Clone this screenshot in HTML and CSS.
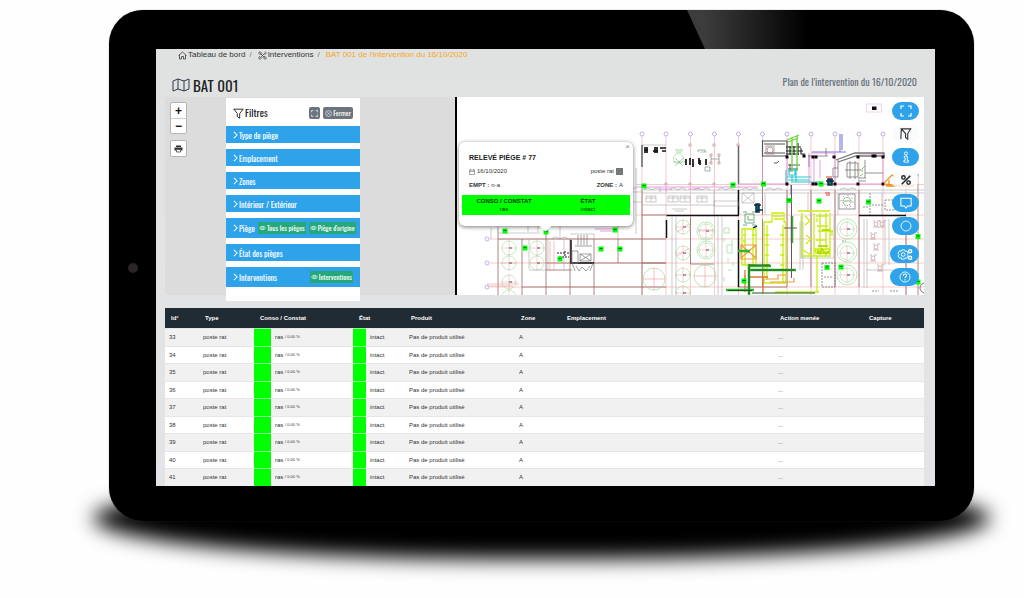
FILE: index.html
```html
<!DOCTYPE html>
<html lang="fr">
<head>
<meta charset="utf-8">
<title>BAT 001 – Plan de l'intervention</title>
<link rel="stylesheet" href="styles.css">
</head>
<body>
<svg class="defs" width="0" height="0" aria-hidden="true">
  <defs>
    <symbol id="i-eye" viewBox="0 0 16 12"><path d="M1 6c3-5 11-5 14 0c-3 5-11 5-14 0z" fill="none" stroke="currentColor" stroke-width="1.6"/><circle cx="8" cy="6" r="2.4" fill="none" stroke="currentColor" stroke-width="1.4"/></symbol>
    <symbol id="i-chev" viewBox="0 0 6 10"><path d="M1 1l4 4l-4 4" fill="none" stroke="currentColor" stroke-width="1.3"/></symbol>
    <symbol id="i-expand" viewBox="0 0 12 12"><path d="M1 4V1h3M8 1h3v3M11 8v3H8M4 11H1V8" fill="none" stroke="currentColor" stroke-width="1.2"/></symbol>
    <symbol id="i-funnel" viewBox="0 0 14 14"><path d="M1 1.500h12L8.500 7v6L5.500 11V7z" fill="none" stroke="currentColor" stroke-width="1.200" stroke-linejoin="round"/></symbol>
  </defs>
</svg>
<div class="tablet">
  <div class="camera"></div>
  <main class="screen">
    <nav class="crumbs" aria-label="Fil d'Ariane">
      <a href="#"><svg class="ico9" viewBox="0 0 18 18"><path d="M1 9l8-7l8 7M3 8v8h4v-5h4v5h4V8" fill="none" stroke="currentColor" stroke-width="1.500"/></svg>Tableau de bord</a>
      <span class="sep">/</span>
      <a href="#"><svg class="ico9" viewBox="0 0 18 18"><path d="M3 3l12 12M15 3L3 15M1 4l3-3l4 4l-3 3zM10 13l3-3l4 4l-3 3zM14 1l3 3l-4 4M4 10l-3 4l3 3l4-4" fill="none" stroke="currentColor" stroke-width="1.300"/></svg>Interventions</a>
      <span class="sep">/</span>
      <span class="current">BAT 001 de l'intervention du 16/10/2020</span>
    </nav>
    <header class="head">
      <h1><svg class="mapico" viewBox="0 0 18 14"><path d="M1 3l5-2l6 2l5-2v10l-5 2l-6-2l-5 2zM6 1v10M12 3v10" fill="none" stroke="#2f3b45" stroke-width="1"/></svg>BAT 001</h1>
      <p>Plan de l'intervention du 16/10/2020</p>
    </header>

    <section class="map">
      <div class="tools">
        <div class="zoom"><button aria-label="Zoom avant">+</button><button aria-label="Zoom arrière">−</button></div>
        <button class="print" aria-label="Imprimer"><svg class="ico9" viewBox="0 0 18 18"><path d="M4 3h10v3H4zM1 7h16v6h-3v-2H4v2H1z" fill="#333"/><path d="M5 11h8v5H5z" fill="#fff" stroke="#333" stroke-width="1.500"/></svg></button>
      </div>
      <aside class="filters">
        <div class="fhead">
          <h2><svg class="ico11"><use href="#i-funnel"/></svg>Filtres</h2>
          <button class="gray" aria-label="Agrandir"><svg class="ico7"><use href="#i-expand"/></svg></button>
          <button class="gray"><svg class="ico7" viewBox="0 0 12 12"><path d="M4 4l4 4M8 4l-4 4" stroke="#fff"/><circle cx="6" cy="6" r="5" fill="none" stroke="#fff"/></svg>Fermer</button>
        </div>
        <div class="fitem"><button class="fold"><svg class="chev"><use href="#i-chev"/></svg>Type de piège</button></div>
        <div class="fitem"><button class="fold"><svg class="chev"><use href="#i-chev"/></svg>Emplacement</button></div>
        <div class="fitem"><button class="fold"><svg class="chev"><use href="#i-chev"/></svg>Zones</button></div>
        <div class="fitem"><button class="fold"><svg class="chev"><use href="#i-chev"/></svg>Intérieur / Extérieur</button></div>
        <div class="fitem tall"><button class="fold"><svg class="chev"><use href="#i-chev"/></svg>Piège</button><button class="green"><svg class="eye"><use href="#i-eye"/></svg>Tous les pièges</button><button class="green"><svg class="eye"><use href="#i-eye"/></svg>Piège d'origine</button></div>
        <div class="fitem"><button class="fold"><svg class="chev"><use href="#i-chev"/></svg>État des pièges</button></div>
        <div class="fitem tall"><button class="fold"><svg class="chev"><use href="#i-chev"/></svg>Interventions</button><button class="green"><svg class="eye"><use href="#i-eye"/></svg>Interventions</button></div>
      </aside>

      <div class="plan">
        <svg class="drawing" viewBox="457 97 467 198" preserveAspectRatio="xMinYMin slice" role="img" aria-label="Plan du bâtiment">
          <defs>
            <g id="pin"><rect x="-2.500" y="-2.500" width="5" height="5" fill="#0f0"/><path d="M-1.500-.5h3" stroke="#064" stroke-width="1"/></g>
            <g id="tank" fill="none" stroke-width=".5"><circle r="7" stroke="#8fd48f"/><path d="M-8 0H8M0-8V8" stroke="#e9a5a5"/><path d="M0 0h3" stroke="#555" stroke-width="1"/></g>
            <g id="bub"><circle r="2" fill="#fff" stroke="#9a9ae0" stroke-width=".7"/></g>
            <g id="desk" fill="none" stroke="#999" stroke-width=".5"><rect width="10" height="6"/><path d="M0 2h10M5 0v6"/></g>
            <g id="seat" fill="none" stroke="#b08080" stroke-width=".6"><circle r="2"/><path d="M-3-3h2M1-3h3M-3 3h6"/></g>
            <g id="doors" fill="none" stroke="#888" stroke-width=".5"><path d="M-8 2q3-4 8 0q5-4 8 0"/></g>
            <g id="col"><rect x="-1.500" y="-1.500" width="3" height="3" fill="#120008"/></g>
            <g id="colo"><rect x="-1" y="-1" width="2" height="2" fill="#fff" stroke="#a66" stroke-width=".5"/></g>
          </defs>
          <!-- axes -->
          <path d="M642 136V295M666 136V295M690.500 136V295M714.500 136V295M738.500 136V295M762.500 136V295M787 136V295M811 136V295M835 136V295M859 136V295M883 136V295M906 174V295M490 239H924M490 263H924M490 287H924M636 184.500H924M636 215H924" fill="none" stroke="#f2b4b4" stroke-width=".7"/>
          <path d="M498 228V295M522 239V295M546 232V295M570 239V295M594 239V270M618 239V263M594 270V295M498 239H666M546 263H666M522 287H666M546 270H572M642 190V295M666 215H642M690.500 217V264H714M666 263H642M762.500 140V215M762.500 219V287M787 190V287M811 190V287M835 190V287M859 190V287M906 217V295M918 174V295M738 287H787" fill="none" stroke="#9d6767" stroke-width=".8"/>
          <path d="M491 228V239M498 233H540M498 222V228M528 226V232M538 226V232M570 234H594V239M560 222V239M618 222V239M529 239V269M548 239V270M564 239V270M642 190H924M642 193H762M633 192H642M633 202H642M636 168V234M642 145H666M642 205H714M714 190V215M738 190V215M859 193H924M882 193V215M672 217V295M676 217V295M718 217V295M722 217V295M801 216V258H834M834 216V258M802 216V258M800 222V270M803 222V270M864 219V288M867 219V288M885 219V265M889 219V265M866 270H893M762 193H859M529 270H546M765 193V215M808 193V212M838 193V215" fill="none" stroke="#aaa" stroke-width=".6"/>
          <use href="#bub" x="642" y="134"/><use href="#bub" x="666" y="134"/><use href="#bub" x="690.500" y="134"/><use href="#bub" x="714.500" y="134"/><use href="#bub" x="738.500" y="134"/><use href="#bub" x="762.500" y="134"/><use href="#bub" x="787" y="134"/><use href="#bub" x="811" y="134"/><use href="#bub" x="835" y="134"/><use href="#bub" x="859" y="134"/><use href="#bub" x="883" y="134"/><use href="#bub" x="487" y="239"/><use href="#bub" x="487" y="263"/><use href="#bub" x="487" y="287"/>
          <!-- walls -->
          <path d="M666.500 215.500H739M738.500 190V215M666.500 220V238M738.500 220V287M571 240V263H594M859 215.500H906" fill="none" stroke="#111" stroke-width="1.500"/>
          <path d="M642 145V167M738.500 145V184" fill="none" stroke="#666" stroke-width="1.500"/>
          <!-- upper machines -->
          <path d="M645 147v6M647 147v6M645 150h3M655 147v6M657 147v6M653 151h5M660 148h6M662 151h4M686 159v6M690 158v7M693 159v8M699 158v6M700 160v5M706 159v6" fill="none" stroke="#111" stroke-width="1.700"/>
          <path d="M675 150h8M676 152h6M700 152h7M675 158l8 8M683 158l-8 8M673 162h12" fill="none" stroke="#77b577" stroke-width=".6"/>
          <circle cx="678.500" cy="158.500" r="5" fill="none" stroke="#8fd48f" stroke-width=".6"/>
          <path d="M698 152v-2h7v2M711 155v8M719 155v8M711 159h8M705 167h5v4h-5z" fill="none" stroke="#777" stroke-width=".6"/>
          <use href="#colo" x="690" y="145"/><use href="#colo" x="714" y="145"/><use href="#colo" x="690" y="184"/><use href="#colo" x="714" y="184"/><use href="#colo" x="666" y="184"/><use href="#colo" x="711" y="155"/><use href="#colo" x="719" y="155"/><use href="#colo" x="711" y="163"/><use href="#colo" x="719" y="163"/><use href="#colo" x="738" y="145"/>
          <path d="M636 187H740M642 184V190M660 189H672M688 189H700M660 187v5M666 187v5M738 187h20M620 188h16M595 229h20M600 231h12" fill="none" stroke="#e6a0e0" stroke-width="1"/>
          <use href="#doors" x="652" y="188"/><use href="#doors" x="678" y="188"/><use href="#doors" x="702" y="188"/><use href="#doors" x="726" y="188"/><use href="#doors" x="750" y="188"/><use href="#doors" x="774" y="188"/><use href="#doors" x="848" y="188"/><use href="#doors" x="560" y="237"/>
          <use href="#desk" x="646" y="196"/><use href="#desk" x="668" y="196"/><use href="#desk" x="680" y="196"/><use href="#desk" x="697" y="196"/>
          <path d="M742 193h12v10h-12zM742 193l12 10M754 193l-12 10M714 201h24v5h-24zM672 209h15M675 211h9" fill="none" stroke="#aaa" stroke-width=".6"/>
          <path d="M745 214h9v9h-9zM743 212h4M752 212h4M743 225h4M752 225h4M748 216v4h5" fill="none" stroke="#4a9a5a" stroke-width=".8"/>
          <!-- tanks -->
          <use href="#tank" x="509" y="248"/><use href="#tank" x="537" y="248"/><use href="#tank" x="509" y="263"/><use href="#tank" x="537" y="263"/><use href="#tank" x="509" y="282"/><use href="#tank" x="509" y="297"/><use href="#tank" x="683" y="227"/><use href="#tank" x="683" y="253"/><use href="#tank" x="683" y="275"/><use href="#tank" x="683" y="293"/><use href="#tank" x="706" y="231"/><use href="#tank" x="706" y="250"/>
          <use href="#tank" x="847" y="229"/><use href="#tank" x="847" y="253"/><use href="#tank" x="847" y="275"/>
          <g fill="none" stroke="#8fd48f" stroke-width=".6"><circle cx="654" cy="279" r="11"/><circle cx="705" cy="276" r="11"/><circle cx="706" cy="231" r="9"/><circle cx="706" cy="250" r="9"/><circle cx="847" cy="229" r="10"/><circle cx="847" cy="252" r="10"/><circle cx="847" cy="275" r="10"/><path d="M724 228v5h5v-5zM724 238v4M732 240v6M727 245h5v8h-5zM728 258v5M733 262v4M728 270h4M724 277v5"/></g>
          <path d="M643 279h22M654 268v22M694 276h22M705 265v22M698 230h16M677 232l12-8M677 256l12-8M487 284h32M487 286h26M550 241v30M554 241v30" fill="none" stroke="#e99" stroke-width=".6"/>
          <path d="M578 235v10M581 235v10M584 235v10M587 235v10M575 246h17M572 251h6v12h-6zM580 254h11v7h-11zM580 254l11 7M591 254l-11 7M576 266l3 5l3-4l4 4l4-5M572 263l3 8M593 263l-3 8" fill="none" stroke="#777" stroke-width=".7"/>
          <path d="M557 253h8M559 257h10M565 251v6M567 253h4" stroke="#222" stroke-width="1" fill="none" stroke-dasharray="2 1"/>
          <!-- upper right hall -->
          <path d="M762.500 141H787V156H762.500zM764 144H785M764 153H785" fill="none" stroke="#555" stroke-width="1.200"/>
          <rect x="766" y="146" width="8" height="8" fill="none" stroke="#977" stroke-width=".7"/><circle cx="770" cy="150" r="3" fill="none" stroke="#977" stroke-width=".7"/>
          <path d="M786 147h15M786 151h17M786 154h13M790 146v9M794 146v9M798 143v12M801 148v6h4" fill="none" stroke="#222" stroke-width="1.100"/>
          <path d="M774 163h3l2-2M788 165h12M788 169h10M790 164v8" fill="none" stroke="#333" stroke-width=".8"/>
          <path d="M792 138V172M797 136V171M787 140l12-5M788 142l10-4" fill="none" stroke="#6bd23c" stroke-width="1.300"/>
          <path d="M789 170h6v5h-6zM787 177h24M788 180h22M786 170v14M796 168v14M793 182h28M792 175v8" fill="none" stroke="#27c5cf" stroke-width="1.100"/>
          <path d="M809 155v12M812 152H846M840 134V152M842 134V150M809 160v6M791 185v10" fill="none" stroke="#7b78dd" stroke-width="1.100"/>
          <path d="M762.500 157V184H787V157M811 153H835V184H811M809 153v31M814 158v26M820 160v18M835 184h48M883 152V184M860 154h22M762 184h-24" fill="none" stroke="#df92d6" stroke-width=".9"/>
          <path d="M836 160L855 153H884V156H856L838 162" fill="none" stroke="#777" stroke-width="1.300"/>
          <path d="M847 163h11v14h-11zM850 161v18M855 161v18M845 170h16M865 173h18M865 160v18M826 148v8M808 156h20M833 168h5v9h-5zM858 178h8M858 181h8M838 160v8" fill="none" stroke="#666" stroke-width=".7"/>
          <path d="M862 172v-3l3-3M860 176l3-2" fill="none" stroke="#4dbb4d" stroke-width=".8"/>
          <use href="#col" x="787" y="157"/><use href="#col" x="804" y="156"/><use href="#col" x="813" y="157"/><use href="#col" x="816" y="157"/><use href="#col" x="834" y="157"/><use href="#col" x="858" y="157"/><use href="#col" x="873" y="156"/><use href="#col" x="875" y="156"/><use href="#col" x="883" y="157"/><use href="#col" x="787" y="184"/><use href="#col" x="813" y="184"/><use href="#col" x="816" y="184"/><use href="#col" x="835" y="184"/><use href="#col" x="858" y="184"/><use href="#col" x="883" y="184"/>
          <path d="M828 179h4v6h-4zM756 204h3v8h-3zM754 205h7M757 210h6M826 181h8M753 228l4-2" fill="#166" stroke="#134" stroke-width="1.600"/>
          <path d="M826 177h6M825 193h5M826 195h4" stroke="#e33" stroke-width="1"/>
          <rect x="866.500" y="104" width="15" height="8" fill="none" stroke="#efbfe9" stroke-width=".7"/><rect x="872" y="106.500" width="4.500" height="3.500" fill="#111"/>
          <path d="M884 183l8-8l3 2M884 184l8 1M886 186h28M889 180v6" fill="none" stroke="#f09227" stroke-width="1.300"/>
          <!-- equipment -->
          <g fill="none" stroke="#c6ee10" stroke-width="1.300">
            <path d="M742 229h14v36h-14zM745 229v36M753 229v36M743 235h3M743 241h3M752 235h4M752 257h4"/>
            <path d="M764 222h8v-9h12v9h2v61h-22zM767 225v55M783 225v58M773 216h10M774 219h9M765 235h4M765 245h4M765 255h4M765 265h4M780 235h4M780 245h4M780 255h4M780 265h4"/>
            <path d="M798 211h32M802 213v43h28v-43M814 213v43M820 213v42M826 213v40M805 216l5 5l-5 4M806 235l5 4l-5 5M803 250l8 5M815 249h14v4h-13zM818 231h15M816 240h10M817 226h11M832 231v5M816 216h12M817 218v4"/>
            <path d="M817 256V293M775 292H819"/>
          </g>
          <path d="M817 250l3 3l2-4l4 5l3-3M817 253h12M822 230h8M818 246h10" stroke="#b8de08" stroke-width="2" fill="none"/>
          <path d="M741 245l15 13M756 245l-15 13M741 245h15v14h-15zM765 279h13v-4h8M770 282h24v-4M745 275v8" fill="none" stroke="#f2994a" stroke-width="1.200"/>
          <path d="M745 270V292M748 277H768M763 277v16" stroke="#d77a35" stroke-width="1.300" fill="none"/>
          <path d="M749 264V295M749 266H771M748 270H796M726 290H754M738 251H750M792 216V243" fill="none" stroke="#33b533" stroke-width="2.500"/>
          <path d="M749 265H770M751 270H795M728 290.500H752M791.500 217V240M749 266V294M752 293H815" fill="none" stroke="#165b16" stroke-width="1"/>
          <path d="M791.500 185V278M784 228h13" fill="none" stroke="#735066" stroke-width="1"/>
          <rect x="839" y="194" width="16" height="15" fill="none" stroke="#666" stroke-width=".7"/><circle cx="847" cy="201.500" r="4" fill="none" stroke="#555" stroke-width=".8" stroke-dasharray="1.500 1"/><path d="M844 201h6" stroke="#6c6" stroke-width="1"/><circle cx="847" cy="201.500" r="6" fill="none" stroke="#a55" stroke-width=".8" stroke-dasharray="1 3.700"/>
          <use href="#seat" x="876" y="224"/><use href="#seat" x="873" y="236"/><use href="#seat" x="876" y="247"/><use href="#seat" x="873" y="258"/><use href="#seat" x="882" y="224"/><use href="#seat" x="880" y="268"/>
          <path d="M822 263h13v24h-13zM824 277h8M863 207h6M872 291h7M890 291h9M842 241h4M870 193v22M872 205h12M885 200h10v10h-10z" fill="none" stroke="#777" stroke-width=".8" stroke-dasharray="2 1"/>
          <circle cx="925" cy="288" r="5" fill="none" stroke="#555" stroke-width=".8"/>
          <!-- traps -->
          <use href="#pin" x="505" y="231"/><use href="#pin" x="546" y="232"/><use href="#pin" x="525" y="248"/><use href="#pin" x="560" y="259"/><use href="#pin" x="601" y="249"/><use href="#pin" x="620" y="249"/><use href="#pin" x="615" y="230"/><use href="#pin" x="644" y="186"/><use href="#pin" x="733" y="185"/><use href="#pin" x="763.500" y="184"/><use href="#pin" x="821" y="184"/><use href="#pin" x="789" y="200.500"/><use href="#pin" x="819" y="201"/><use href="#pin" x="868.500" y="202"/><use href="#pin" x="744" y="281"/><use href="#pin" x="827" y="267.500"/><use href="#pin" x="841" y="267"/><use href="#pin" x="918" y="236.500"/><use href="#pin" x="918" y="282"/>
        </svg>

        <div class="popup">
          <button class="close" aria-label="Fermer">×</button>
          <h3>RELEVÉ PIÈGE # 77</h3>
          <div class="prow"><span><svg class="cal" viewBox="0 0 12 12"><path d="M1 2h10v9H1zM1 5h10M3 0v3M9 0v3" fill="none" stroke="#555"/></svg>16/10/2020</span><span>poste rat <i class="sq"></i></span></div>
          <div class="prow"><span><b>EMPT :</b> n-a</span><span><b>ZONE :</b> A</span></div>
          <div class="state"><div><b>CONSO / CONSTAT</b><span>ras</span></div><div><b>ÉTAT</b><span>intact</span></div></div>
        </div>

        <div class="actions">
          <button class="pill" aria-label="Plein écran"><svg><use href="#i-expand"/></svg></button>
          <button class="pill off" aria-label="Filtres"><svg viewBox="0 0 14 14"><path d="M1.500 1h11L9 6.500V13L6.500 11V6.500zM1.500 1L1 13" fill="none" stroke="#333" stroke-width="1.300"/></svg></button>
          <button class="pill" aria-label="Informations"><svg viewBox="0 0 14 14"><circle cx="7" cy="2.800" r="1.800" fill="none" stroke="#fff"/><path d="M5 6h3.500v5H10v2H4.500v-2H6V8H5z" fill="none" stroke="#fff"/></svg></button>
          <button class="pill off" aria-label="Pourcentages"><svg viewBox="0 0 14 14"><path d="M12 2L2 12" stroke="#222" stroke-width="1.800"/><circle cx="4" cy="4" r="2" fill="none" stroke="#222" stroke-width="1.600"/><circle cx="10" cy="10" r="2" fill="none" stroke="#222" stroke-width="1.600"/></svg></button>
          <button class="pill" aria-label="Commentaires"><svg viewBox="0 0 14 14"><path d="M1 1.500h12v9H9l-2 2.500l-2-2.500H1z" fill="none" stroke="#fff" stroke-width="1.200"/></svg></button>
          <button class="pill" aria-label="Cercle"><svg viewBox="0 0 14 14"><circle cx="7" cy="7" r="5.800" fill="none" stroke="#fff"/></svg></button>
          <button class="pill wide first" aria-label="Réglages"><svg class="gears" viewBox="0 0 17 14"><path d="M5 2h3l.5 1.500l2-.2L12 6l-1 1l1 1.500l-1.500 2.500l-2-.3L8 12H5l-.5-1.500l-2 .3L1 8.500L2 7L1 5.500L2.500 3l2 .5z" fill="none" stroke="#fff"/><circle cx="6.500" cy="7" r="2" fill="none" stroke="#fff"/><circle cx="14" cy="3.500" r="1.700" fill="none" stroke="#fff" stroke-width="1.500"/><circle cx="14" cy="10.500" r="1.700" fill="none" stroke="#fff" stroke-width="1.500"/></svg></button>
          <button class="pill wide" aria-label="Aide"><svg viewBox="0 0 14 14"><circle cx="7" cy="7" r="5.900" fill="none" stroke="#fff"/><path d="M5 5.500q0-2 2-2t2 1.800q0 1-1 1.500T7 8.500M7 9.700v1.300" fill="none" stroke="#fff" stroke-width="1.200"/></svg></button>
        </div>
      </div>
    </section>

    <table>
      <colgroup><col class="c-id"><col class="c-type"><col class="c-sw1"><col class="c-conso"><col class="c-sw2"><col class="c-etat"><col class="c-prod"><col class="c-zone"><col><col class="c-act"><col class="c-cap"></colgroup>
      <thead><tr><th>Id°</th><th>Type</th><th colspan="2">Conso / Constat</th><th colspan="2">État</th><th>Produit</th><th>Zone</th><th>Emplacement</th><th>Action menée</th><th>Capture</th></tr></thead>
      <tbody>
        <tr><td>33</td><td>poste rat</td><td class="g"></td><td>ras <sup>/ 0.00 %</sup></td><td class="g"></td><td>intact</td><td>Pas de produit utilisé</td><td>A</td><td></td><td>...</td><td></td></tr>
        <tr><td>34</td><td>poste rat</td><td class="g"></td><td>ras <sup>/ 0.00 %</sup></td><td class="g"></td><td>intact</td><td>Pas de produit utilisé</td><td>A</td><td></td><td>...</td><td></td></tr>
        <tr><td>35</td><td>poste rat</td><td class="g"></td><td>ras <sup>/ 0.00 %</sup></td><td class="g"></td><td>intact</td><td>Pas de produit utilisé</td><td>A</td><td></td><td>...</td><td></td></tr>
        <tr><td>36</td><td>poste rat</td><td class="g"></td><td>ras <sup>/ 0.00 %</sup></td><td class="g"></td><td>intact</td><td>Pas de produit utilisé</td><td>A</td><td></td><td>...</td><td></td></tr>
        <tr><td>37</td><td>poste rat</td><td class="g"></td><td>ras <sup>/ 0.00 %</sup></td><td class="g"></td><td>intact</td><td>Pas de produit utilisé</td><td>A</td><td></td><td>...</td><td></td></tr>
        <tr><td>38</td><td>poste rat</td><td class="g"></td><td>ras <sup>/ 0.00 %</sup></td><td class="g"></td><td>intact</td><td>Pas de produit utilisé</td><td>A</td><td></td><td>...</td><td></td></tr>
        <tr><td>39</td><td>poste rat</td><td class="g"></td><td>ras <sup>/ 0.00 %</sup></td><td class="g"></td><td>intact</td><td>Pas de produit utilisé</td><td>A</td><td></td><td>...</td><td></td></tr>
        <tr><td>40</td><td>poste rat</td><td class="g"></td><td>ras <sup>/ 0.00 %</sup></td><td class="g"></td><td>intact</td><td>Pas de produit utilisé</td><td>A</td><td></td><td>...</td><td></td></tr>
        <tr><td>41</td><td>poste rat</td><td class="g"></td><td>ras <sup>/ 0.00 %</sup></td><td class="g"></td><td>intact</td><td>Pas de produit utilisé</td><td>A</td><td></td><td>...</td><td></td></tr>
      </tbody>
    </table>
  </main>
</div>
</body>
</html>
```
FILE: styles.css
```css
* { box-sizing: border-box; }
body {
  margin: 0;
  padding: 10px 50px 76px 109px;
  background: #fefefe;
  color: #333;
  font: 6px/8px "Liberation Sans", Arial, sans-serif;
}
button { margin: 0; padding: 0; border: 0; background: none; color: inherit; font: inherit; cursor: pointer; }
h1, h2, h3, p { margin: 0; font-weight: normal; }
a { color: inherit; text-decoration: none; }
svg { display: block; flex: none; }
.defs { position: absolute; }
.ico9 { width: 9px; height: 9px; }
.ico11 { width: 11px; height: 11px; }
.ico7 { width: 7px; height: 7px; }

.tablet {
  position: relative;
  display: grid;
  grid-template-columns: 47px minmax(0, 1fr) 39px;
  padding: 39px 0 35px;
  border-radius: 34px;
  background: #000;
  box-shadow: 0 0 1px #444;
}
.tablet::before {
  content: "";
  position: absolute;
  z-index: -1;
  left: -16px;
  right: -16px;
  bottom: -38px;
  height: 76px;
  border-radius: 50% / 50% 50% 60% 60%;
  background: #000;
  filter: blur(10px);
}
.tablet::after {
  content: "";
  position: absolute;
  top: 0;
  right: 167px;
  width: 120px;
  height: 39px;
  background: linear-gradient(90deg, #3c3c3c 15%, #000);
  clip-path: polygon(0 0, 100% 0, 100% 100%, 15% 100%);
}
.camera { align-self: center; justify-self: center; width: 10px; height: 10px; border-radius: 50%; background: #2a2526; }
.screen { background: linear-gradient(#e0e2e2, #e3e4e7); padding: 0 11px 0 9px; overflow: hidden; }

.crumbs { display: flex; align-items: center; gap: 4px; height: 12px; padding-left: 13px; font-size: 8px; line-height: 12px; }
.crumbs a { display: flex; align-items: center; gap: 1px; }
.sep { padding-right: 2px; color: #777; }
.current { color: #f5a623; }
.head { display: flex; justify-content: space-between; align-items: center; height: 36px; padding: 0 7px; font-family: Oswald, "Liberation Sans Narrow", "Liberation Sans", sans-serif; }
.head h1 { display: flex; align-items: center; gap: 3px; padding-top: 12px; color: #222; font-size: 15px; line-height: 20px; }
.mapico { width: 18px; height: 14px; }
.head p { padding-top: 6px; color: #69737c; font-size: 10px; line-height: 14px; }

.map { display: flex; align-items: flex-start; height: 198px; background: #dcdcdc; }
.tools { display: grid; gap: 6px; width: 61px; padding: 5px 0 0 5px; }
.zoom, .print { width: 17px; border: 1px solid #b5b5b5; border-radius: 2px; background: #fff; }
.zoom button { display: block; width: 15px; height: 15px; color: #111; font: bold 12px/14px "Liberation Sans", sans-serif; }
.zoom button + button { border-top: 1px solid #ccc; }
.print { display: grid; place-items: center; height: 17px; }

.filters { display: grid; grid-template-columns: minmax(0, 1fr); gap: 6px; width: 134px; margin-top: 1px; padding-bottom: 14px; background: #fff; font-family: Oswald, "Liberation Sans Narrow", "Liberation Sans", sans-serif; }
.fhead { display: flex; align-items: center; gap: 3px; height: 22px; padding: 8px 7px 0; }
.fhead h2 { display: flex; align-items: center; gap: 1px; margin-right: auto; color: #222; font-size: 10px; line-height: 14px; }
.gray { display: flex; align-items: center; gap: 1px; height: 12px; padding: 0 2px; border-radius: 2px; background: #6c757d; color: #fff; font-size: 7px; }
.fitem { display: flex; align-items: center; gap: 3px; height: 17px; padding: 0 7px; background: #2ea3ea; color: #fff; }
.fitem.tall { height: 20px; }
.fold { display: flex; align-items: center; gap: 1px; margin-right: auto; font-size: 8px; line-height: 12px; white-space: nowrap; }
.chev { width: 5px; height: 8px; }
.green { display: flex; align-items: center; gap: 1px; height: 12px; padding: 0 1px; background: #25a97a; font-size: 7px; white-space: nowrap; }
.eye { width: 7px; height: 6px; }

.plan { position: relative; flex: 1; min-width: 0; height: 198px; margin-left: 95px; border-left: 2px solid #000; background: #fff; overflow: hidden; }
.drawing { width: 100%; height: 100%; }
.popup { position: absolute; left: 2px; top: 45px; width: 174px; height: 84px; padding: 11px 3px 0; border-radius: 6px; background: #fff; box-shadow: 0 1px 4px #0008; }
.popup::after { content: ""; position: absolute; left: 82px; bottom: -4px; width: 9px; height: 9px; background: #fff; transform: rotate(45deg); }
.close { position: absolute; top: 1px; right: 3px; color: #888; font-size: 8px; }
.popup h3 { padding: 0 7px; color: #222; font-size: 7px; font-weight: bold; line-height: 10px; }
.prow { display: flex; justify-content: space-between; padding: 3px 7px 0; line-height: 11px; }
.prow span { display: flex; align-items: center; gap: 2px; }
.cal { width: 6px; height: 6px; }
.sq { width: 7px; height: 7px; background: #777; }
.state { display: grid; grid-template-columns: 1fr 1fr; margin-top: 4px; padding: 2px 0; background: #0f0; color: #063306; line-height: 8px; text-align: center; }
.state b, .state span { display: block; }

.actions { position: absolute; top: 5px; right: 5px; display: grid; justify-items: end; gap: 5px; }
.pill { display: grid; place-items: center; width: 27px; height: 18px; border-radius: 9px; background: #2ea3ea; color: #fff; }
.pill svg { width: 12px; height: 12px; }
.pill.off { background: #f8fafccc; }
.pill.wide { width: 29px; }
.pill.first { margin-top: 5px; }
.pill .gears { width: 16px; height: 13px; }

table { width: 100%; margin-top: 13px; border-collapse: collapse; table-layout: fixed; background: #fff; }
th { height: 20px; padding: 0 6px; background: #212b34; color: #fff; text-align: left; white-space: nowrap; }
td { height: 17px; padding: 0 4px; border-top: 1px solid #e4e6e8; white-space: nowrap; }
tbody tr:nth-child(odd) td { height: 18px; background-color: #f1f1f1; }
tbody tr td.g { padding: 0; background-color: #0f0; border-top-color: #8f8; }
sup { font-size: 4px; line-height: 4px; vertical-align: 1px; }
.c-id { width: 34px; }
.c-type { width: 55px; }
.c-sw1 { width: 17px; }
.c-conso { width: 82px; }
.c-sw2 { width: 13px; }
.c-etat { width: 39px; }
.c-prod { width: 110px; }
.c-zone { width: 46px; }
.c-act { width: 89px; }
.c-cap { width: 61px; }
```
